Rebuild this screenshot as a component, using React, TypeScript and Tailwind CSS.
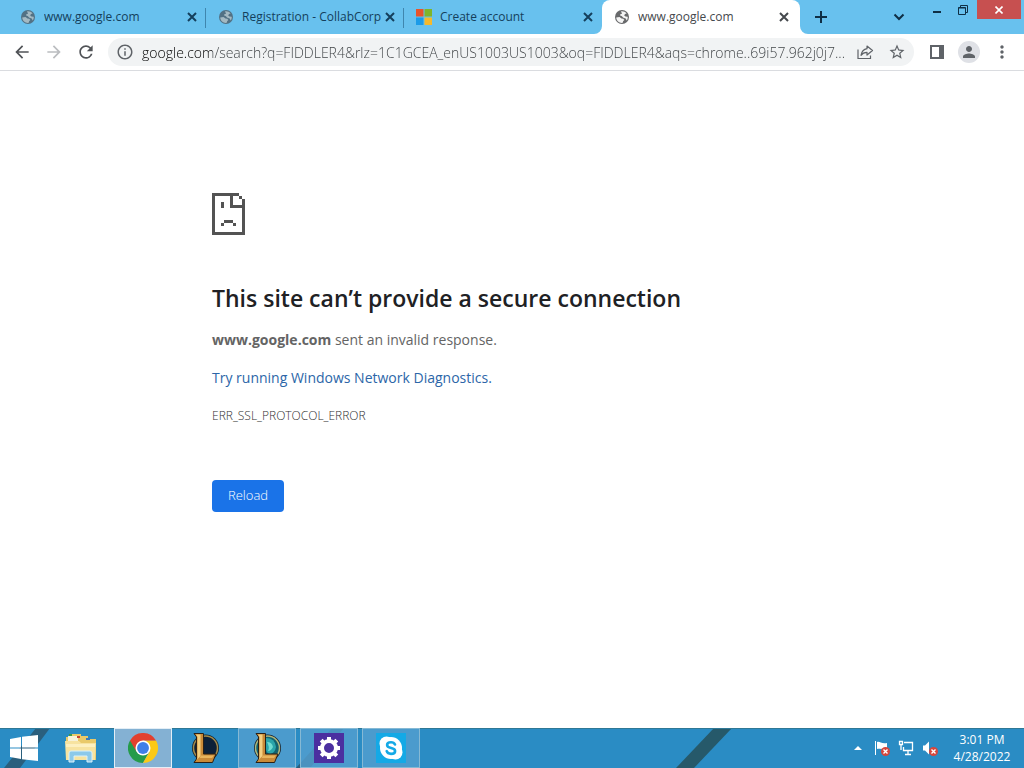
import type { ReactNode } from 'react';
import {
  MdArrowBack,
  MdArrowForward,
  MdRefresh,
  MdInfoOutline,
  MdStarBorder,
  MdPerson,
  MdMoreVert,
} from 'react-icons/md';

type Tab = { title: string; icon: 'globe' | 'microsoft'; active?: boolean };

const tabs: Tab[] = [
  { title: 'www.google.com', icon: 'globe' },
  { title: 'Registration - CollabCorp', icon: 'globe' },
  { title: 'Create account', icon: 'microsoft' },
  { title: 'www.google.com', icon: 'globe', active: true },
];

const url =
  'google.com/search?q=FIDDLER4&rlz=1C1GCEA_enUS1003US1003&oq=FIDDLER4&aqs=chrome..69i57.962j0j7...';

function Globe({ active }: { active?: boolean }) {
  return (
    <svg viewBox="0 0 16 16" className="size-4 shrink-0" aria-hidden="true">
      <circle cx="8" cy="8" r="7" fill={active ? '#68696b' : '#527184'} />
      <path
        d="M2.200 8.500l3.300-.4 2 1.400 1.800.2 1 1.300-1.200 1.200-.3 1.600c-3.200.6-6.200-1.600-6.600-5.300zM7 2.300c2-.5 4.300.4 5.600 2.200l-1.600.4-.8 1.600 1.300.9 2.200.3c.2 1.400-.2 2.700-1 3.700l-1-1.900-2.300-.8-1.800-1.600-1.500-.5.2-1.300 1.700-.6z"
        fill={active ? '#f4f4f4' : '#a4b9c2'}
      />
    </svg>
  );
}

function MicrosoftLogo() {
  return (
    <svg viewBox="0 0 16 16" className="size-4 shrink-0" aria-hidden="true">
      <path fill="#e8532b" d="M0 0h7.500v7.500H0z" />
      <path fill="#7fb52a" d="M8.500 0H16v7.500H8.500z" />
      <path fill="#1b9be8" d="M0 8.500h7.500V16H0z" />
      <path fill="#f6b92b" d="M8.500 8.500H16V16H8.500z" />
    </svg>
  );
}

function BrowserTab({ tab, divider }: { tab: Tab; divider: boolean }) {
  return (
    <div
      className={
        tab.active
          ? 'relative flex h-full w-[198px] min-w-0 items-center rounded-t-lg bg-white pl-3 pr-2 text-[#45494d]'
          : 'relative flex h-full w-[198px] min-w-0 items-center pl-3 pr-1.5 text-[#143f5c]'
      }
    >
      {tab.icon === 'globe' ? <Globe active={tab.active} /> : <MicrosoftLogo />}
      <span className="ml-2 flex-1 overflow-hidden whitespace-nowrap text-[12px]">{tab.title}</span>
      <button aria-label="Close tab" className="flex size-4 shrink-0 items-center justify-center">
        <svg viewBox="0 0 10 10" className="size-[10px]" aria-hidden="true">
          <path d="M1 1l8 8M9 1L1 9" stroke="currentColor" strokeWidth="2" />
        </svg>
      </button>
      {divider && <span className="absolute right-0 top-2 h-5 w-px bg-[#3f86ae]" />}
      {tab.active && (
        <>
          <svg viewBox="0 0 8 8" className="absolute -left-2 bottom-0 size-2" aria-hidden="true">
            <path d="M8 0v8H0a8 8 0 0 0 8-8z" fill="#fff" />
          </svg>
          <svg viewBox="0 0 8 8" className="absolute -right-2 bottom-0 size-2" aria-hidden="true">
            <path d="M0 0v8h8a8 8 0 0 1-8-8z" fill="#fff" />
          </svg>
        </>
      )}
    </div>
  );
}

function TabStrip() {
  return (
    <header className="flex h-[34px] items-center bg-[#68c1ee] pl-2">
      <div className="flex h-full min-w-0">
        {tabs.map((tab, i) => (
          <BrowserTab key={i} tab={tab} divider={i < 2} />
        ))}
      </div>
      <button aria-label="New tab" className="ml-[15px] text-[#0f2f45]">
        <svg viewBox="0 0 12 12" className="size-3" aria-hidden="true">
          <path d="M0 6h12M6 0v12" stroke="currentColor" strokeWidth="2" />
        </svg>
      </button>
      <div className="ml-auto flex h-full items-start text-[#0f2f45]">
        <button aria-label="Search tabs" className="mr-5 flex h-full items-center">
          <svg viewBox="0 0 12 8" className="h-2 w-3" fill="none" aria-hidden="true">
            <path d="M1.500 1.500L6 6l4.500-4.500" stroke="currentColor" strokeWidth="2" />
          </svg>
        </button>
        <button aria-label="Minimize" className="flex h-5 w-6 items-center justify-center">
          <svg viewBox="0 0 8 8" className="size-2" aria-hidden="true">
            <path d="M0 6h8" stroke="currentColor" strokeWidth="2" />
          </svg>
        </button>
        <button aria-label="Restore" className="flex h-5 w-7 items-center justify-center">
          <svg viewBox="0 0 10 10" className="size-[10px]" fill="none" stroke="currentColor" aria-hidden="true">
            <path d="M.5 2.500h7v7h-7zM.5 3h7M2.500 2V.5h7v7H8" />
          </svg>
        </button>
        <button aria-label="Close" className="mr-[3px] flex h-[19px] w-11 items-center justify-center bg-[#c75050] text-white">
          <svg viewBox="0 0 8 8" className="size-2" aria-hidden="true">
            <path d="M.5.5l7 7M7.500.5l-7 7" stroke="currentColor" strokeWidth="1.600" />
          </svg>
        </button>
      </div>
    </header>
  );
}

function Toolbar() {
  return (
    <nav className="flex h-[37px] items-center border-b border-[#dadce0] bg-white pl-3 pr-3 text-[#5f6368]">
      <button aria-label="Back" className="text-[#505357]">
        <MdArrowBack className="size-5" />
      </button>
      <button aria-label="Forward" className="ml-3 text-[#bbbdc0]">
        <MdArrowForward className="size-5" />
      </button>
      <button aria-label="Reload page" className="ml-3 text-[#505357]">
        <MdRefresh className="size-5" />
      </button>
      <div className="ml-3 flex h-7 min-w-0 flex-1 items-center rounded-full bg-[#f1f3f4] pl-2 pr-2">
        <MdInfoOutline className="size-[18px] shrink-0" />
        <input
          aria-label="Address"
          defaultValue={url}
          className="ml-2 min-w-0 flex-1 bg-[linear-gradient(90deg,#000000_70px,#3c4043_70px)] bg-clip-text text-[14px] font-light text-transparent outline-none"
        />
        <button aria-label="Share this page" className="ml-2">
          <svg viewBox="0 0 18 18" className="size-[18px]" fill="none" stroke="currentColor" strokeWidth="1.200" aria-hidden="true">
            <path d="M2 6.500v9h12.500v-3" />
            <path d="M11 3l5.500 4.500L11 12V9.300c-2.800 0-4.600.9-6 3C5.600 8.800 7.600 6.300 11 5.700z" strokeLinejoin="round" />
          </svg>
        </button>
        <button aria-label="Bookmark this tab" className="ml-[14px]">
          <MdStarBorder className="size-[18px]" />
        </button>
      </div>
      <button aria-label="Side panel" className="ml-4">
        <svg viewBox="0 0 14 14" className="size-[14px]" aria-hidden="true">
          <path d="M1 1h12v12H1z" fill="none" stroke="currentColor" strokeWidth="2" />
          <path d="M9 0h5v14H9z" fill="currentColor" />
        </svg>
      </button>
      <button aria-label="Profile" className="ml-[14px] flex size-[22px] items-center justify-center rounded-full bg-[#dfe1e6]">
        <MdPerson className="size-[18px]" />
      </button>
      <button aria-label="Menu" className="ml-3">
        <MdMoreVert className="size-5" />
      </button>
    </nav>
  );
}

function SadPage() {
  return (
    <svg viewBox="0 0 11 14" className="h-[42px] w-[33px]" fill="#535353" shapeRendering="crispEdges" aria-hidden="true">
      <path d="M0 0h9v1H1v12h9V5H6V1h1v3h3V2h1v12H0z" />
      <path d="M9 1h1v1H9zM3 3h1v2H3zM4 9h3v1H4zM3 10h1v1H3zM7 10h1v1H7z" />
    </svg>
  );
}

function ErrorPage() {
  return (
    <main className="min-h-0 flex-1 bg-white text-[#646464]">
      <div className="mx-auto w-full max-w-[600px] pt-[122px]">
        <SadPage />
        <h1 className="mt-12 text-[23px] font-semibold leading-[30px] text-[#202124]">
          This site can’t provide a secure connection
        </h1>
        <p className="mt-4 text-[14px] leading-[22px]">
          <strong>www.google.com</strong> sent an invalid response.
        </p>
        <p className="mt-4 text-[14px] leading-[22px]">
          <a href="#diagnose" className="text-[#2c66a8]">
            Try running Windows Network Diagnostics.
          </a>
        </p>
        <p className="mt-4 text-[12px] font-light leading-[22px] text-[#303030]">ERR_SSL_PROTOCOL_ERROR</p>
        <button className="mt-[53px] h-8 rounded-[4px] bg-[#1a73e8] px-4 text-[13px] font-light text-white">Reload</button>
      </div>
    </main>
  );
}

function WindowsLogo() {
  return (
    <svg viewBox="0 0 28 26" className="h-[26px] w-7" fill="#fff" aria-hidden="true">
      <path d="M0 4l11-2v10.500H0zM12 1.800L28 0v12.500H12zM0 13.500h11V24L0 22zM12 13.500h16V26l-16-1.800z" />
    </svg>
  );
}

function ExplorerIcon() {
  return (
    <svg viewBox="0 0 34 30" className="h-[30px] w-[34px]" aria-hidden="true">
      <path d="M2 4h3V1h12v2h7v3h8v21H2z" fill="#e9c969" />
      <path d="M4 3h10v5H4z" fill="#f7f2d8" />
      <path d="M5 1h3v2H5z" fill="#3f9b46" />
      <path d="M13 3h3v2h-3z" fill="#c9452f" />
      <path d="M22 5h4v2h-4z" fill="#3b79bb" />
      <path d="M1 8h14l2 2h15l-1 17H2z" fill="#f7e3a0" />
      <path d="M2 11h29v3H2z" fill="#fdf0c0" />
      <path d="M5 29V20q0-2 2-2h19q2 0 2 2v9h-5v-6H10v6z" fill="#8cc9ea" stroke="#d9f1fb" />
    </svg>
  );
}

function ChromeIcon() {
  return (
    <svg viewBox="0 0 48 48" className="size-[30px]" aria-hidden="true">
      <path d="M24 24L3.200 12A24 24 0 0 0 24 48l10-18z" fill="#259b4b" />
      <path d="M34.400 30L24 48A24 24 0 0 0 44.800 12H24z" fill="#fbc917" />
      <path d="M3.200 12l10.400 18L24 12h20.800A24 24 0 0 0 3.200 12z" fill="#e2402f" />
      <circle cx="24" cy="24" r="12" fill="#fff" />
      <circle cx="24" cy="24" r="9.500" fill="#3f7fe8" />
    </svg>
  );
}

function LeagueIcon({ teal }: { teal?: boolean }) {
  return (
    <svg viewBox="0 0 30 30" className="size-[30px]" aria-hidden="true">
      <circle cx="15.500" cy="15" r="13.500" fill="#15202b" />
      <circle cx="15.500" cy="15" r="12" fill={teal ? '#12626f' : '#0c2038'} stroke={teal ? '#b0b67c' : '#a38a4a'} strokeWidth="1.500" />
      {teal && <path d="M14 5q9 0 10 9-1 6-6 7-4-1-4-5z" fill="#2aa5aa" />}
      {teal && <path d="M15 9q5 0 6 5-2 4-5 4 2-4-1-9z" fill="#6fdcd2" />}
      <path d="M4 .5h9.500V21H26l-3.500 8.500H4L6.500 26V4z" fill="#c98a38" stroke="#2b2015" strokeWidth="1" />
      <path d="M6 1.500h4.500V23L6.500 27l1-2V4z" fill="#f3cf80" />
      <path d="M11 22.500h13L22 25H9.500z" fill="#e8b45c" />
    </svg>
  );
}

function GearIcon() {
  return (
    <svg viewBox="0 0 30 30" className="size-[30px]" aria-hidden="true">
      <path d="M0 0h30v30H0z" fill="#4b2fa0" />
      <circle cx="15" cy="15" r="7" fill="none" stroke="#fff" strokeWidth="4" />
      <path
        d="M15 4v4M15 22v4M4 15h4M22 15h4M7.200 7.200l2.900 2.900M19.900 19.900l2.900 2.900M7.200 22.800l2.900-2.900M19.900 10.100l2.900-2.900"
        stroke="#fff"
        strokeWidth="4"
      />
    </svg>
  );
}

function SkypeIcon() {
  return (
    <svg viewBox="0 0 30 30" className="size-[30px]" aria-hidden="true">
      <path d="M0 0h30v30H0z" fill="#14a9e6" />
      <circle cx="10.500" cy="10.500" r="7" fill="#fff" />
      <circle cx="19.500" cy="19.500" r="7" fill="#fff" />
      <circle cx="15" cy="15" r="11" fill="#fff" />
      <path
        d="M19 11.500c-.8-1.700-2.200-2.200-4-2.200-2.400 0-3.900 1-3.900 2.700 0 4.200 8 1.800 8 5.900 0 1.900-1.700 3-4.100 3-2.200 0-3.700-.9-4.300-2.700"
        fill="none"
        stroke="#14a9e6"
        strokeWidth="2.600"
        strokeLinecap="round"
      />
    </svg>
  );
}

function TaskButton({ label, state, children }: { label: string; state?: 'open' | 'focused'; children: ReactNode }) {
  if (state === 'focused') {
    return (
      <button
        aria-label={label}
        className="flex h-full w-[58px] shrink-0 items-center justify-center border border-[#e3eef6] bg-[#84b1d3]"
      >
        {children}
      </button>
    );
  }
  if (state === 'open') {
    return (
      <button
        aria-label={label}
        className="flex h-full w-[58px] shrink-0 items-center justify-center border border-[#86b9d4] bg-[#549fcf]/80"
      >
        {children}
      </button>
    );
  }
  return (
    <button aria-label={label} className="flex h-full w-[58px] shrink-0 items-center justify-center">
      {children}
    </button>
  );
}

function ErrorBadge() {
  return (
    <>
      <circle cx="11.500" cy="11.500" r="4.500" fill="#d6463c" />
      <path d="M9.500 9.500l4 4M13.500 9.500l-4 4" stroke="#fff" strokeWidth="1.400" />
    </>
  );
}

function Tray() {
  return (
    <div className="ml-auto flex h-full items-center pr-3 text-white">
      <button aria-label="Show hidden icons">
        <svg viewBox="0 0 8 4" className="h-1 w-2" aria-hidden="true">
          <path d="M0 4l4-4 4 4z" fill="#fff" />
        </svg>
      </button>
      <button aria-label="Action Center" className="ml-3">
        <svg viewBox="0 0 16 16" className="size-4" aria-hidden="true">
          <path d="M1.500 1v14" stroke="#fff" />
          <path d="M3 2c3-1 4 2 10 1v6c-5 1-7-1-10 0z" fill="#fff" />
          <ErrorBadge />
        </svg>
      </button>
      <button aria-label="Network" className="ml-2">
        <svg viewBox="0 0 16 16" className="size-4" fill="none" stroke="#fff" aria-hidden="true">
          <path d="M6 2.500h8.500v8H5.500V7M10 11v3M7 14.500h6" strokeWidth="1.300" />
          <path d="M1.500 1.500h3v3h-3zM3 5v5" strokeWidth="1.300" />
        </svg>
      </button>
      <button aria-label="Volume" className="ml-2">
        <svg viewBox="0 0 16 16" className="size-4" aria-hidden="true">
          <path d="M1 5.500h2l4-4v13l-4-4H1z" fill="#fff" />
          <ErrorBadge />
        </svg>
      </button>
      <div className="ml-[14px] w-[60px] text-center text-[12px] leading-[17px]">
        <div>3:01 PM</div>
        <div>4/28/2022</div>
      </div>
    </div>
  );
}

function Taskbar() {
  return (
    <footer className="relative h-10 shrink-0 overflow-hidden bg-[#2a8cc4]">
      {/* wallpaper showing through the glass */}
      <svg viewBox="0 0 1024 40" preserveAspectRatio="none" className="absolute inset-0 size-full" aria-hidden="true">
        <path d="M36 0h14L20 40H4zM332 0h12l-34 40h-14z" fill="#2a5f7d" />
        <path d="M714 0h18l-38 40h-18z" fill="#26596a" />
        <path d="M0 0h1024v1H0z" fill="#2f7895" />
      </svg>
      <div className="relative flex h-full items-center">
        <button aria-label="Start" className="mx-[10px]">
          <WindowsLogo />
        </button>
        <div className="flex h-full flex-1 items-center gap-1 pl-1">
          <TaskButton label="File Explorer"><ExplorerIcon /></TaskButton>
          <TaskButton label="Google Chrome" state="focused"><ChromeIcon /></TaskButton>
          <TaskButton label="League of Legends"><LeagueIcon /></TaskButton>
          <TaskButton label="League client" state="open"><LeagueIcon teal /></TaskButton>
          <TaskButton label="Settings" state="open"><GearIcon /></TaskButton>
          <TaskButton label="Skype" state="open"><SkypeIcon /></TaskButton>
        </div>
        <Tray />
      </div>
    </footer>
  );
}

export default function App() {
  return (
    <div className="flex h-screen flex-col font-['Open_Sans','Noto_Sans',sans-serif]">
      <TabStrip />
      <Toolbar />
      <ErrorPage />
      <Taskbar />
    </div>
  );
}
